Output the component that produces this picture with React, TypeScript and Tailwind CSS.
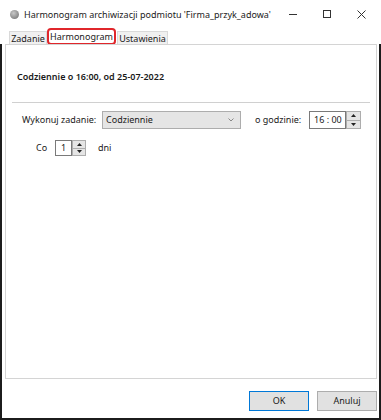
const font = { fontFamily: '"Noto Sans", "Open Sans", sans-serif' };

function Spinner() {
  return (
    <div className="flex flex-col h-full w-full">
      <div className="flex-1 flex items-center justify-center bg-[#e5e5e5] border border-[#adadad]">
        <svg width="5" height="3" viewBox="0 0 5 3"><path d="M2.5 0 L5 3 L0 3 Z" fill="#222" /></svg>
      </div>
      <div className="flex-1 flex items-center justify-center bg-[#e5e5e5] border border-t-0 border-[#adadad]">
        <svg width="5" height="3" viewBox="0 0 5 3"><path d="M0 0 L5 0 L2.5 3 Z" fill="#222" /></svg>
      </div>
    </div>
  );
}

export default function App() {
  return (
    <div className="w-[381px] h-[420px] bg-white flex flex-col text-[#1a1a1a] whitespace-nowrap" style={font}>
      {/* title bar */}
      <div className="h-[28px] flex items-center shrink-0">
        <div className="ml-[10px] w-[9px] h-[9px] rounded-full bg-[radial-gradient(circle_at_40%_35%,#c8c8c8,#6b6b6b)]" />
        <span className="ml-[5px] text-[9px] leading-none">
          Harmonogram archiwizacji podmiotu 'Firma_przyk_adowa'
        </span>
        <div className="ml-auto flex h-full mr-[2px]">
          <div className="w-[34px] flex items-center justify-center">
            <svg width="8" height="1"><rect width="8" height="1" fill="#333" /></svg>
          </div>
          <div className="w-[34px] flex items-center justify-center">
            <svg width="8" height="8"><rect x="0.5" y="0.5" width="7" height="7" fill="none" stroke="#333" /></svg>
          </div>
          <div className="w-[35px] flex items-center justify-center">
            <svg width="9" height="9"><path d="M0.5 0.5 L8.5 8.5 M8.5 0.5 L0.5 8.5" stroke="#333" strokeWidth="1" /></svg>
          </div>
        </div>
      </div>

      {/* tabs */}
      <div className="h-[16px] flex items-end pl-[9px] text-[9px] leading-none shrink-0">
        <div className="w-[38px] h-[13px] flex items-center justify-center bg-[#f0f0f0] border border-b-0 border-[#d9d9d9]">Zadanie</div>
        <div className="w-[69px] h-[17px] flex items-center justify-center bg-white border-2 border-[#e0262b] rounded-[4px] -mb-px">Harmonogram</div>
        <div className="w-[51px] h-[13px] ml-px flex items-center justify-center bg-[#f0f0f0] border border-b-0 border-[#d9d9d9]">Ustawienia</div>
      </div>

      {/* body */}
      <div className="flex-1 flex flex-col border-x-2 border-b-2 border-[#1c1c1c]">
        <div className="ml-[3px] mr-[2px] h-[335px] border border-[#d4d4d4] bg-white flex flex-col text-[9px]">
          <div className="mt-[26px] pl-[11px] leading-[12px] font-semibold">Codziennie o 16:00, od 25-07-2022</div>
          <div className="mt-[19px] mx-[6px] h-px bg-[#d0d0d0]" />

          <div className="mt-[8px] h-[18px] flex items-center pl-[16px]">
            <span className="w-[80px]">Wykonuj zadanie:</span>
            <div className="w-[139px] h-full flex items-center justify-between bg-[#e5e5e5] border border-[#adadad] pl-[3px] pr-[6px]">
              <span>Codziennie</span>
              <svg width="6" height="4" viewBox="0 0 6 4"><path d="M0.5 0.5 L3 3 L5.5 0.5" fill="none" stroke="#888" /></svg>
            </div>
            <span className="ml-[14px] w-[54px]">o godzinie:</span>
            <div className="w-[37px] h-full flex items-center border border-[#7a7a7a] pl-[4px]">16 : 00</div>
            <div className="w-[15px] h-full"><Spinner /></div>
          </div>

          <div className="mt-[11px] h-[16px] flex items-center pl-[30px]">
            <span className="w-[19px]">Co</span>
            <div className="w-[17px] h-full flex items-center border border-[#7a7a7a] pl-[5px]">1</div>
            <div className="w-[14px] h-full"><Spinner /></div>
            <span className="ml-[12px]">dni</span>
          </div>
        </div>

        <div className="flex justify-end gap-[8px] pt-[12px] pr-[2px] text-[9px]">
          <button className="w-[60px] h-[20px] bg-[#e1e1e1] border border-[#0078d7]">OK</button>
          <button className="w-[60px] h-[20px] bg-[#e1e1e1] border border-[#adadad]">Anuluj</button>
        </div>
      </div>
    </div>
  );
}
